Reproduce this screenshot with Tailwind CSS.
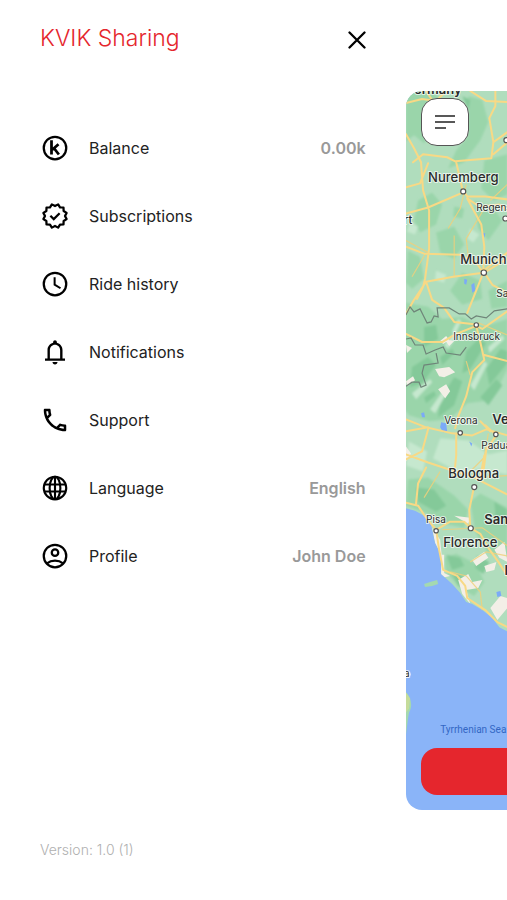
<!DOCTYPE html>
<html lang="en">
<head>
  <meta charset="UTF-8" />
  <meta name="viewport" content="width=device-width, initial-scale=1.0"/>
  <title>KVIK Sharing</title>
  <script src="https://cdn.jsdelivr.net/npm/@tailwindcss/browser@4"></script>
</head>
<body class="bg-white font-['Inter',sans-serif] text-[#222222]">
  <div class="flex min-h-screen overflow-hidden">

    <!-- Drawer -->
    <div class="flex w-4/5 shrink-0 flex-col px-10 pt-6 pb-10">
      <header class="flex h-8 items-center justify-between">
        <h1 class="pb-1 text-[23px] leading-7 font-light text-[#e5262d]">KVIK Sharing</h1>
        <button type="button" aria-label="Close menu" class="text-black">
          <svg class="h-[18px] w-[18px]" viewBox="0 0 18 18" fill="none" stroke="currentColor" stroke-width="2.3" stroke-linecap="round"><path d="M1.5 1.500l15 15M16.500 1.500l-15 15"/></svg>
        </button>
      </header>

      <nav class="mt-[58px]">
        <ul>
          <li>
            <a href="#balance" class="flex h-17 items-center gap-[19px]">
              <svg class="h-[30px] w-[30px] text-black" viewBox="0 0 24 24" fill="none" stroke="currentColor" stroke-width="1.800"><circle cx="12" cy="12" r="9"/><path d="M9.200 5.800v11.400M14.800 9l-5 4.400M11.200 12.200l3.900 5" stroke-width="2.200"/></svg>
              <span>Balance</span>
              <span class="ml-auto font-semibold text-[#999999]">0.00k</span>
            </a>
          </li>
          <li>
            <a href="#subscriptions" class="flex h-17 items-center gap-[19px]">
              <svg class="h-[30px] w-[30px] text-black" viewBox="0 0 24 24" fill="none" stroke="currentColor" stroke-width="1.800" stroke-linejoin="round"><path d="M12 4L14.500 2.700L16 5.100L18.800 5.200L18.900 8L21.300 9.500L20 12L21.300 14.500L18.900 16L18.800 18.800L16 18.900L14.500 21.300L12 20L9.500 21.300L8 18.900L5.200 18.800L5.100 16L2.700 14.500L4 12L2.700 9.500L5.100 8L5.200 5.200L8 5.100L9.500 2.700z"/><path d="M8.300 11.800l2.700 2.700 4.700-4.700" stroke-linejoin="miter"/></svg>
              <span>Subscriptions</span>
            </a>
          </li>
          <li>
            <a href="#history" class="flex h-17 items-center gap-[19px]">
              <svg class="h-[30px] w-[30px] text-black" viewBox="0 0 24 24" fill="none" stroke="currentColor" stroke-width="1.800"><circle cx="12" cy="12" r="9"/><path d="M11.700 6.500v6l4.700 2.900" stroke-width="1.600"/></svg>
              <span>Ride history</span>
            </a>
          </li>
          <li>
            <a href="#notifications" class="flex h-17 items-center gap-[19px]">
              <svg class="h-[30px] w-[30px] text-black" viewBox="0 0 24 24" fill="currentColor"><path d="M12 22c1.100 0 2-.9 2-2h-4c0 1.100.9 2 2 2zM4 17.200h2V10.500c0-2.900 1.800-5.200 4.500-5.900V4c0-.83.67-1.500 1.500-1.500s1.500.67 1.500 1.500v.6c2.700.7 4.500 3 4.500 5.900v6.700h2V19H4zM12 6.200c-2.300 0-4.100 1.900-4.100 4.300v6.700h8.200v-6.700c0-2.400-1.800-4.300-4.100-4.300z"/></svg>
              <span>Notifications</span>
            </a>
          </li>
          <li>
            <a href="#support" class="flex h-17 items-center gap-[19px]">
              <svg class="h-[30px] w-[30px] text-black" viewBox="0 0 24 24" fill="currentColor"><path d="M6.540 5c.06.890.21 1.760.45 2.590l-1.200 1.200c-.41-1.200-.67-2.470-.76-3.790h1.510m9.860 12.020c.85.240 1.720.39 2.600.45v1.490c-1.320-.09-2.590-.35-3.800-.75l1.200-1.190M7.500 3H4c-.55 0-1 .45-1 1 0 9.390 7.610 17 17 17 .55 0 1-.45 1-1v-3.490c0-.55-.45-1-1-1-1.240 0-2.450-.2-3.570-.57-.1-.04-.21-.05-.31-.05-.26 0-.51.1-.71.29l-2.200 2.200c-2.830-1.450-5.150-3.760-6.590-6.590l2.200-2.200c.28-.28.36-.67.25-1.020C8.700 6.450 8.500 5.250 8.500 4c0-.55-.45-1-1-1z"/></svg>
              <span>Support</span>
            </a>
          </li>
          <li>
            <a href="#language" class="flex h-17 items-center gap-[19px]">
              <svg class="h-[30px] w-[30px] text-black" viewBox="0 0 24 24" fill="none" stroke="currentColor" stroke-width="1.700"><circle cx="12" cy="12" r="9"/><ellipse cx="12" cy="12" rx="4.300" ry="9"/><path d="M3.500 9.200h17M3.500 14.800h17M12 3v18"/></svg>
              <span>Language</span>
              <span class="ml-auto font-semibold text-[#999999]">English</span>
            </a>
          </li>
          <li>
            <a href="#profile" class="flex h-17 items-center gap-[19px]">
              <svg class="h-[30px] w-[30px] text-black" viewBox="0 0 24 24" fill="none" stroke="currentColor" stroke-width="1.800"><circle cx="12" cy="12" r="9"/><circle cx="12" cy="9.300" r="2.600"/><path d="M5.600 17.900c3.600-2.900 9.200-2.900 12.800 0"/></svg>
              <span>Profile</span>
              <span class="ml-auto font-semibold text-[#999999]">John Doe</span>
            </a>
          </li>
        </ul>
      </nav>

      <p class="mt-auto text-sm leading-5 font-light text-[#b0b0b0]">Version: 1.0 (1)</p>
    </div>

    <!-- Map -->
    <main class="relative mt-[91px] mb-[90px] flex-1 overflow-hidden rounded-l-2xl bg-[#8ab4f8]">
      <svg class="absolute inset-0 h-full w-full" viewBox="406 91 101 719" preserveAspectRatio="xMinYMin slice" role="img" aria-label="Map">
        <defs>
          <filter id="relief" x="-10%" y="-10%" width="120%" height="120%"><feGaussianBlur stdDeviation="1.200"/></filter>
          <clipPath id="coast"><path d="M400 85H510V631L499 625 492 616 482 608 472 602 466 600 460 591 452 582 441 572 441 553 435 541 431 523 426 515 415 509 400 505z"/></clipPath>
        </defs>
        <!-- land -->
        <g clip-path="url(#coast)">
          <path d="M400 85h110v550h-110z" fill="#b0ddbd"/>
          <g filter="url(#relief)">
            <g fill="#9ad5aa">
              <path d="M406 91h28l6 10-8 16 4 14-12 12-10-8-8 6zM468 96l14 4 6 22-8 18-16 22-16 6 8-18 12-14zM484 160l23-6v40l-14 6-12-12zM418 200l14-8 10 12-6 20-16 8-6-12zM436 232l18-6 10 18-10 14-14-6zM474 200l18 6 10 14-14 20-10-12zM462 272l18 8 2 18-20 6-12-14zM408 250l12 6 4 22-12 10-6-6zM488 290l19-10v26l-16 2zM454 206l10 2-2 10-9-2z"/>
              <path d="M406 302l22 4 14 12 20-2 20 10 25-8v50l-10 20-14 12-16 2-18 16-20 2-20-6-7-10z"/>
              <path d="M408 478l20-2 26 18 14 14-4 18-20-4-16-10-22-8zM470 500l10-8 27 14v50l-20-6-12-20zM444 556l12-4 20 10 8 18-10 14-14-8-14-16z"/>
            </g>
            <g fill="#84c999">
              <path d="M412 366l16-10 8 8-14 18-12 4zM440 398l14-22 8 4-8 24-16 12zM466 350l12-12 8 4-16 26-8 4zM486 368l14-20 7 2v12l-18 22zM424 326l12-2 2 14-14 8zM416 486l18 2 12 16-10 6-18-10zM452 572l10 2 6 12-10-2zM494 500l13 8v12l-12-6zM480 396l16-18 6 6-14 20zM446 553l14 3 4 8-12 4zM477 554l12 6-6 12-8-6zM462 96l8 4-2 10zM440 356l12-8 2 4-12 12zM424 396l10-6 2 4-10 8z"/>
            </g>
            <g fill="#c6e8cf">
              <path d="M412 392l18-14 2 3-16 17zM430 408l14-20 3 3-12 21zM470 384l14-24 3 3-13 26zM488 346l14-12 2 4-15 14zM444 344l10-12 3 3-9 13zM436 270l10 4-2 8-9-3zM410 222l8 4-3 8-8-3zM470 228l9 6-6 8-6-4zM440 437l28 2 20 14 19-4v24l-28-6-16 6-30-16zM409 440l18 10-4 20-17-6zM452 330l6-12 3 2-6 14z"/>
            </g>
          </g>
          <path d="M435 368l14-2 6 5-11 5-5-1zM438 388l8-5 4 7-5 7zM440 340l6-5 3 4-6 4zM406 380l7-5 2 4-8 6zM444 338l10 2-5 5zM406 344l6 3-5 5zM406 445l5 7-5 8zM458 578l10-6 4 8 10-2-4 8-12 2 4 14-8-10zM438 553l6 0 0 18 6 3-9 2zM472 558l12-8 4 6-12 8zM484 564l12-4-2 8-8 2zM490 606l10-12 7 2v10l-10 12zM494 548l10-8 3 20-8-4zM454 514l16 2-2 6zM432 526l8 12 2 20-6-10z" fill="#f3efe7"/>
        </g>
        <path d="M424 582l6-2 7-2 1 4-6 2-7 1zM406 690c5 4 7 14 3 20l-1 6-2 16z" fill="#a4d9b0"/>
        <path d="M406 690l4 6-1 10-3 4z" fill="#c5dc9a"/>
        <path d="M441 421l5 1 1 8-4 1-3-5zM464 278l3 1-1 5-2-1zM471 284l3-2 1 8-3 2zM496 590l4-1 1 5-4 1zM421 412l3-1 1 5-3 0zM469 440l3 2-1 3zM482 232l3 1-1 4z" fill="#7baaf7"/>

        <!-- minor roads -->
        <g fill="none" stroke="#efd07b" stroke-width="1.200" opacity=".85">
          <path d="M428 143l8-14 6-24M454 235v42M406 240l22 12M412 276l14-24M466 184l-6 24-12 20M484 208l-18 30 2 18M490 200l17-16M478 322l29 12M466 360l4 14M448 468l26 8 33-2M488 432l-4 24-18 18M442 528l40-2 25 18M470 560l16-10 21 4M482 608l-2-18-14-16-16-4M440 470l-16 26"/>
        </g>
        <!-- highways -->
        <g fill="none" stroke="#f8d985" stroke-width="2" stroke-linejoin="round" stroke-linecap="round">
          <path d="M406 103l16-4 14 2 10-10M426 91l8 12M470 91l16 10 21 1M495 91l0 15-6 12 4 24-2 16-36 3-8-4-24-3-10 8M406 134l8 14 7 14 2 28 6 20v38l-4 30-2 8-6 12M406 187l14-4 8-20M456 162l6 26 5 8 18 0 22 3M463 192l-35 15-22 6M467 198l14 26 3 22-1 24 24-18M467 198l12 8 20-2 8 6M493 142l14-10M507 142l-14 12M406 246l18 7 36 1 16 8 7 10M483 272l-30 4-27 5 6 18 12 8 10 14 18 2 10 5 31-22M483 272l-8 20-8 20M484 272l8 12 15 8M484 272l23-14M426 281l-12 18-8 14M476 325l-20 8-14 8-20 0-16-8M476 325l4 16 4 18-12 12-6 24-8 20-3 12M484 354l23 6M406 418l20 8 26 6 20 2 14-6 21 6M406 430l22-4M428 428l-6 22-16 8M406 453l22 8 24 8 20 6 35 18M456 432l0 22-2 20M474 484l-5 24 1 18M470 526l10 6 8 14 10 14 9 14M406 501l12 3 8 12 10 12M436 528l14-8 14 0 6 6M426 466l-8 16-2 20M436 528l3 20 4 20 14 6 8 10 2 12 18 12 12 12 12 6M480 476l4-22M496 433l-8 14M485 424l11 10-10 14-4 30M480 420l10 10"/>
        </g>
        <!-- borders -->
        <path d="M406 314l4-8 4 5 6-3 3 6 4 8 4-1 3-6 4 1-1-9 12 0 10 6 6 0 6 5 5-3 10 2 8-7 13-2 10-1" fill="none" stroke="#6f8579" stroke-width="1.200"/>
        <path d="M406 338l5-1 4 7 8 0 3 9 9-4 8-3 3 6 14 2 6-8M436 352l2 10-14 2-2 8 4 12-5 2-2-5-7 0-6 4" fill="none" stroke="#6f8579" stroke-width="1.200"/>

        <!-- city dots -->
        <g fill="#ffffff" stroke="#555555" stroke-width="1.200">
          <circle cx="463" cy="191" r="2.500"/><circle cx="505" cy="218" r="2.500"/><circle cx="506" cy="140" r="2.500"/><circle cx="483.500" cy="272" r="2.700"/><circle cx="476" cy="324" r="2.200"/><circle cx="460" cy="431.500" r="2.200"/><circle cx="495.500" cy="433" r="2.200"/><circle cx="474" cy="485.500" r="2.500"/><circle cx="470.500" cy="526.500" r="2.500"/><circle cx="436" cy="529" r="2.200"/><circle cx="407" cy="672" r="3.500" stroke="none"/>
        </g>
        <!-- labels -->
        <g fill="#2b2b2b" stroke="#ffffff" stroke-width="2" stroke-opacity=".7" paint-order="stroke" stroke-linejoin="round" font-family="Inter, sans-serif">
          <g font-size="13" font-weight="500">
            <text x="428" y="182">Nuremberg</text>
            <text x="460" y="263">Munich</text>
            <text x="448" y="476">Bologna</text>
            <text x="443" y="545">Florence</text>
          </g>
          <g font-size="13" font-weight="600">
            <text x="414" y="94">ermany</text>
            <text x="492" y="423">Venice</text>
            <text x="484" y="522">San Marino</text>
            <text x="504" y="573">Italy</text>
          </g>
          <g font-size="10">
            <text x="476" y="211">Regensburg</text>
            <text x="496" y="296">Salzburg</text>
            <text x="453" y="339">Innsbruck</text>
            <text x="444" y="423">Verona</text>
            <text x="481" y="448">Padua</text>
            <text x="426" y="521">Pisa</text>
            <text x="404" y="223" font-size="11" font-weight="500">rt</text>
            <text x="404" y="675">a</text>
          </g>
        </g>
        <text x="440" y="730" fill="#3367c4" font-family="Roboto, sans-serif" font-size="10">Tyrrhenian Sea</text>
      </svg>

      <button type="button" aria-label="Open menu" class="absolute top-[7px] left-[15px] flex h-12 w-12 items-center justify-center rounded-2xl border border-[#555555] bg-white text-[#222222]">
        <svg class="h-5 w-5" viewBox="0 0 20 20" fill="none" stroke="currentColor" stroke-width="1.500"><path d="M0 4h20M0 10h20M0 16h11"/></svg>
      </button>
      <button type="button" aria-label="Start ride" class="absolute right-0 bottom-[15px] left-[15px] h-[47px] rounded-l-2xl bg-[#e5262d]"></button>
    </main>

  </div>
</body>
</html>
